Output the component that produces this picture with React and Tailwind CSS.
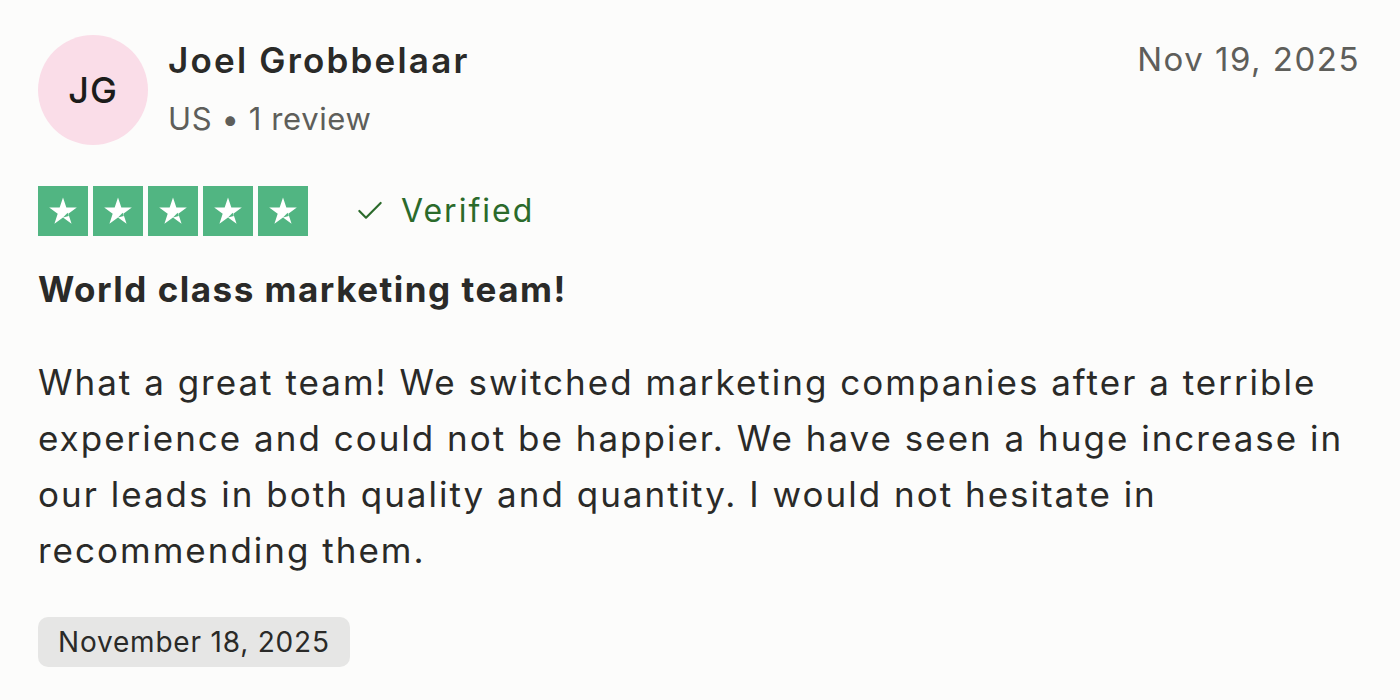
import { Check } from 'lucide-react';

function Star() {
  return (
    <div className="w-[50px] h-[50px] bg-[#51b582] flex items-center justify-center">
      <svg viewBox="0 0 24 24" className="w-[34px] h-[34px]">
        <path
          d="M12 2.5l2.35 7.05h7.4l-6 4.35 2.3 7.1L12 16.6 5.95 21l2.3-7.1-6-4.35h7.4z"
          fill="#ffffff"
        />
        <path d="M15.3 13.3l0.75 2.25L12 16.6z" fill="#51b582" />
      </svg>
    </div>
  );
}

export default function App() {
  return (
    <div className="min-h-screen w-full bg-[#fcfcfb] text-[#2a2a28] font-['Inter',sans-serif]">
      <div className="pl-[38px] pr-[40px] pt-[35px]">
        {/* header */}
        <div className="flex items-start justify-between">
          <div className="flex items-start gap-[20px]">
            <div className="w-[110px] h-[110px] rounded-full bg-[#fadde8] flex items-center justify-center text-[36px] font-medium tracking-[1px] text-[#1c1c1a]">
              JG
            </div>
            <div className="flex flex-col pt-[1px]">
              <span className="text-[35px] leading-[48px] font-semibold tracking-[2.2px]">Joel Grobbelaar</span>
              <span className="text-[31px] leading-[46px] text-[#5e5e5a] mt-[12px] tracking-[0.6px]">US • 1 review</span>
            </div>
          </div>
          <span className="text-[33px] leading-[48px] text-[#5e5e5a] tracking-[1.5px]">Nov 19, 2025</span>
        </div>

        {/* rating */}
        <div className="flex items-center mt-[41px]">
          <div className="flex gap-[5px]">
            <Star />
            <Star />
            <Star />
            <Star />
            <Star />
          </div>
          <div className="flex items-center ml-[46px] text-[#2b6a2b]">
            <Check className="w-[32px] h-[32px]" strokeWidth={1.6} />
            <span className="ml-[15px] text-[32px] leading-[48px] tracking-[2px]">Verified</span>
          </div>
        </div>

        {/* content */}
        <h2 className="mt-[28px] text-[35px] leading-[50px] font-bold tracking-[1.5px]">World class marketing team!</h2>
        <p className="mt-[40px] text-[35px] leading-[56px] tracking-[2px]">
          What a great team! We switched marketing companies after a terrible experience and could not be happier. We have seen a huge increase in our leads in both quality and quantity. I would not hesitate in recommending them.
        </p>

        <div className="mt-[39px] inline-flex items-center h-[50px] pl-[20px] pr-[20px] rounded-[10px] bg-[#e6e6e5] text-[28px] tracking-[0.8px]">
          November 18, 2025
        </div>
      </div>
    </div>
  );
}
